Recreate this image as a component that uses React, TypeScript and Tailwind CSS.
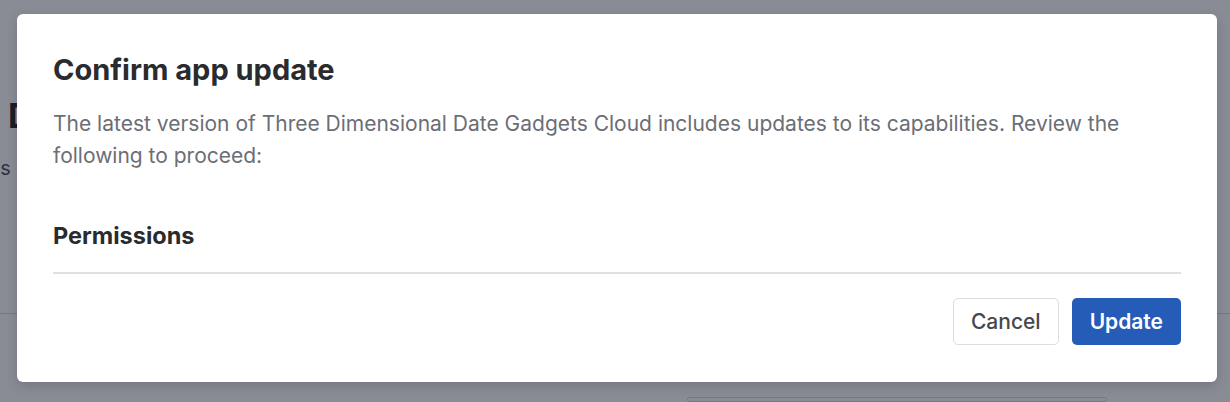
export default function App() {
  return (
    <div className="relative h-[402px] w-[1230px] overflow-hidden bg-white font-['Inter',sans-serif]">
      {/* page behind the modal */}
      <div className="flex h-full flex-col">
        <div className="px-[8px] pt-[96px]">
          <h1 className="text-[34px] font-bold leading-[40px] text-[#1f2124]">Dashboard</h1>
          <p className="-ml-[46px] mt-[18px] text-[20px] leading-[28px] text-[#4b4f56]">Apps</p>
        </div>
        <div className="mt-[131px] border-t border-[#d5d7db]" />
        <div className="ml-[687px] mt-[83px] h-[40px] w-[420px] rounded-md border border-[#d5d7db]" />
      </div>

      {/* overlay */}
      <div className="absolute inset-0 bg-[#13192b]/50" />

      {/* dialog */}
      <div className="absolute left-[17px] top-[14px] w-[1200px] rounded-[6px] bg-white px-9 pb-[37px] pt-[36px] shadow-[0_4px_12px_rgba(0,0,0,0.15)]">
        <h2 className="text-[29px] font-bold leading-[40px] text-[#2a2b2f]">Confirm app update</h2>
        <p className="mt-[18px] text-[21px] leading-[32px] text-[#6b6e75]">
          The latest version of Three Dimensional Date Gadgets Cloud includes updates to its capabilities. Review the
          following to proceed:
        </p>
        <h3 className="mt-[48px] text-[23.5px] font-bold leading-[32px] text-[#2a2b2f]">Permissions</h3>
        <div className="mt-[20px] h-[2px] bg-[#dfe0e2]" />
        <div className="mt-[24px] flex justify-end gap-[13px]">
          <button className="h-[47px] rounded-[5px] border border-[#dcdde0] bg-white px-[17px] text-[21px] font-medium text-[#46484d]">
            Cancel
          </button>
          <button className="h-[47px] rounded-[5px] bg-[#245cb8] px-[18px] text-[21px] font-semibold text-white">
            Update
          </button>
        </div>
      </div>
    </div>
  );
}
